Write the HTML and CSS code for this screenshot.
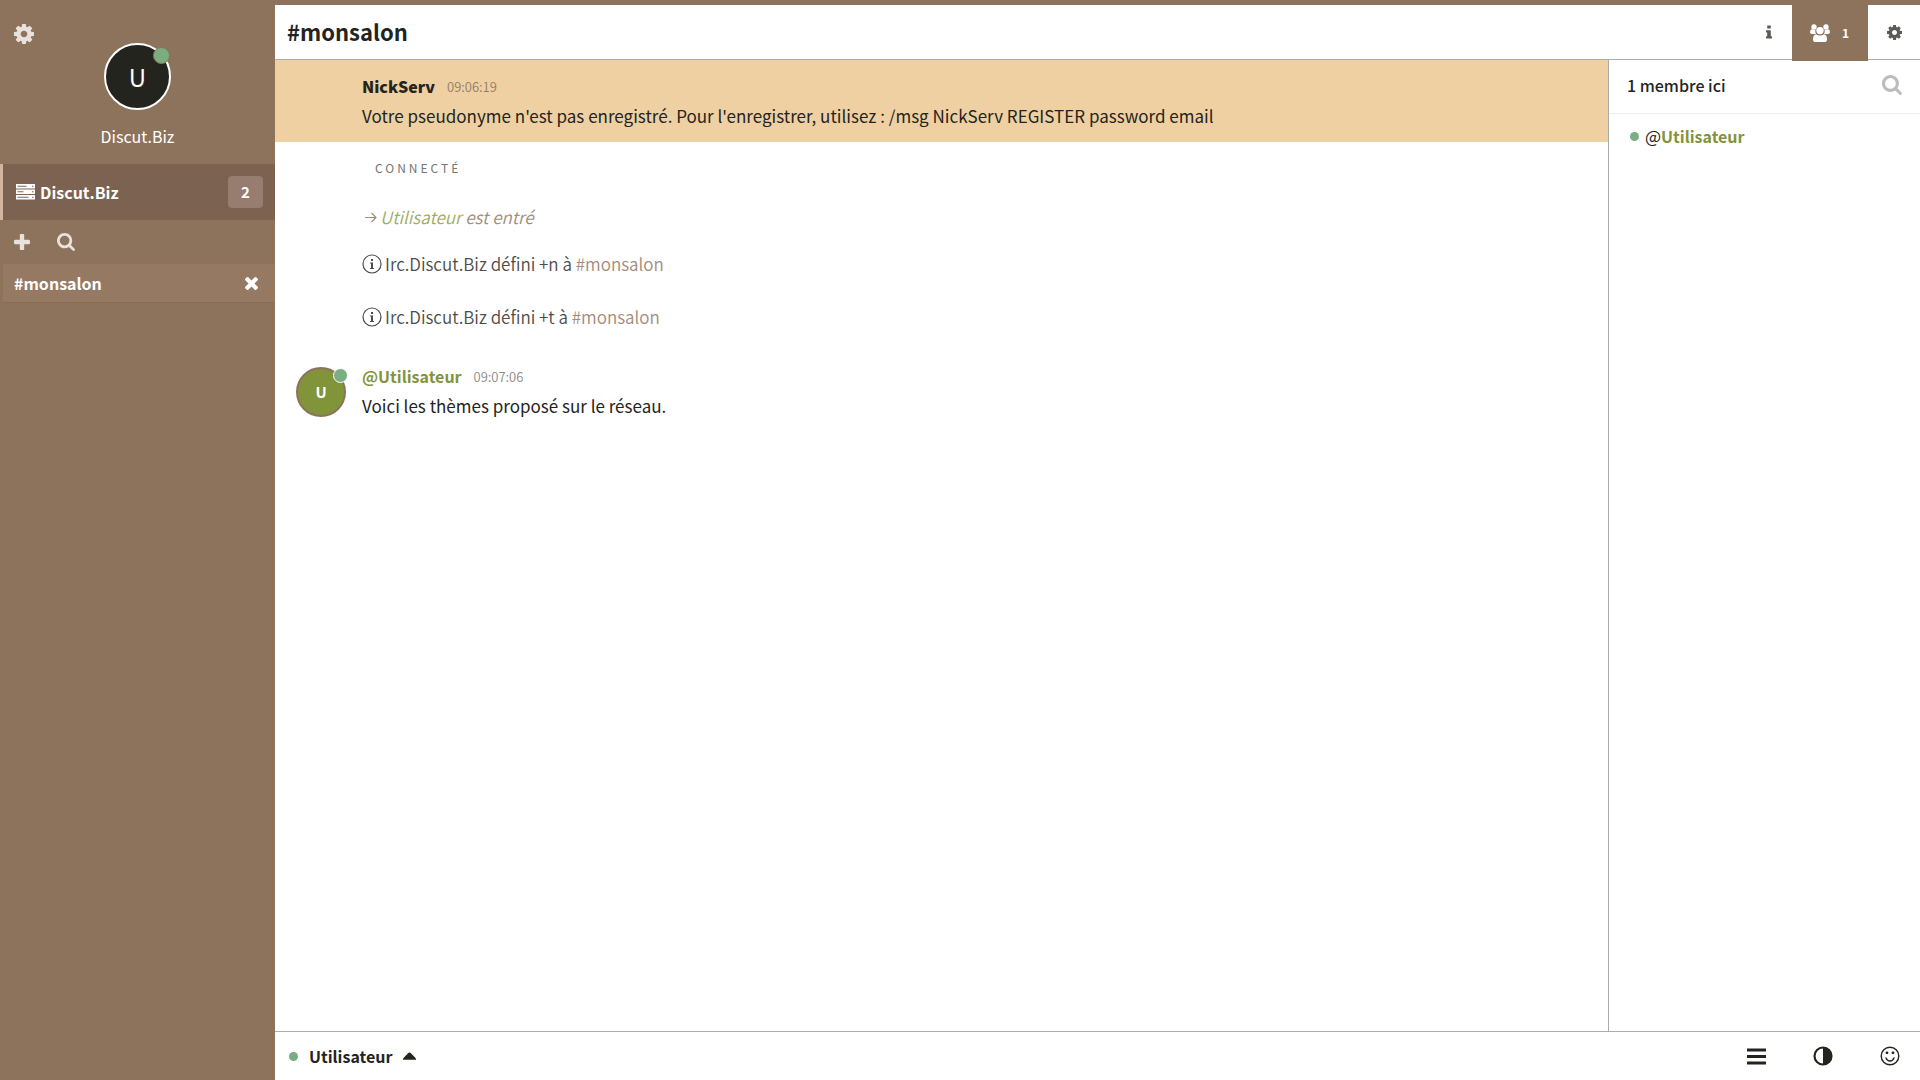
FILE: index.html
```html
<!DOCTYPE html>
<html lang="fr">
<head>
<meta charset="utf-8">
<meta name="viewport" content="width=device-width, initial-scale=1">
<title>#monsalon</title>
<link rel="stylesheet" href="styles.css">
</head>
<body>
<svg class="sprite" aria-hidden="true">
  <symbol id="cog" viewBox="128 128 1536 1536"><path d="M1152 896q0-106-75-181t-181-75-181 75-75 181 75 181 181 75 181-75 75-181zm512-109v222q0 12-8 23t-20 13l-185 28q-19 54-39 91 35 50 107 138 10 12 10 25t-9 23q-27 37-99 108t-94 71q-12 0-26-9l-138-108q-44 23-91 38-16 136-29 186-7 28-36 28h-222q-14 0-24.500-8.500t-11.500-21.500l-28-184q-49-16-90-37l-141 107q-10 9-25 9-14 0-25-11-126-114-165-168-7-10-7-23 0-12 8-23 15-21 51-66.500t54-70.500q-27-50-41-99l-183-27q-13-2-21-12.500t-8-23.500v-222q0-12 8-23t19-13l186-28q14-46 39-92-40-57-107-138-10-12-10-24 0-10 9-23 26-36 98.500-107.500t94.500-71.500q13 0 26 10l138 107q44-23 91-38 16-136 29-186 7-28 36-28h222q14 0 24.500 8.500t11.500 21.500l28 184q49 16 90 37l142-107q9-9 24-9 13 0 25 10 129 119 165 170 7 8 7 22 0 12-8 23-15 21-51 66.500t-54 70.500q26 50 41 98l183 28q13 2 21 12.500t8 23.500z"/></symbol>
  <symbol id="search" viewBox="64 128 1664 1664"><path d="M1216 832q0-185-131.500-316.500t-316.500-131.500-316.500 131.500-131.500 316.500 131.500 316.500 316.500 131.500 316.500-131.500 131.500-316.500zm512 832q0 52-38 90t-90 38q-54 0-90-38l-343-342q-179 124-399 124-143 0-273.500-55.500t-225-150-150-225-55.500-273.500 55.500-273.500 150-225 225-150 273.500-55.500 273.500 55.500 225 150 150 225 55.500 273.500q0 220-124 399l343 343q37 37 37 90z"/></symbol>
  <symbol id="plus" viewBox="192 128 1408 1408"><path d="M1600 736v192q0 40-28 68t-68 28h-416v416q0 40-28 68t-68 28h-192q-40 0-68-28t-28-68v-416h-416q-40 0-68-28t-28-68v-192q0-40 28-68t68-28h416v-416q0-40 28-68t68-28h192q40 0 68 28t28 68v416h416q40 0 68 28t28 68z"/></symbol>
  <symbol id="times" viewBox="302 366 1188 1188"><path d="M1490 1322q0 40-28 68l-136 136q-28 28-68 28t-68-28l-294-294-294 294q-28 28-68 28t-68-28l-136-136q-28-28-28-68t28-68l294-294-294-294q-28-28-28-68t28-68l136-136q28-28 68-28t68 28l294 294 294-294q28-28 68-28t68 28l136 136q28 28 28 68t-28 68l-294 294 294 294q28 28 28 68z"/></symbol>
  <symbol id="info" viewBox="576 128 640 1408"><path d="M1216 1344v128q0 26-19 45t-45 19h-512q-26 0-45-19t-19-45v-128q0-26 19-45t45-19h64v-384h-64q-26 0-45-19t-19-45v-128q0-26 19-45t45-19h384q26 0 45 19t19 45v576h64q26 0 45 19t19 45zm-128-1152v192q0 26-19 45t-45 19h-256q-26 0-45-19t-19-45v-192q0-26 19-45t45-19h256q26 0 45 19t19 45z"/></symbol>
  <symbol id="server" viewBox="0 0 19 16"><path fill-rule="evenodd" d="M0 0h19v4.500H0zM1.500 1.800v.9h9v-.9zM16 1.800v.9h1.500v-.9zM0 5.500h19V10H0zM1.500 7.300v.9h6v-.9zM16 7.300v.9h1.500v-.9zM0 11h19v4.500H0zM1.500 12.800v.9h11v-.9zM16 12.800v.9h1.500v-.9z"/></symbol>
  <symbol id="group" viewBox="0 0 20 18"><circle cx="4" cy="3" r="2.700"/><circle cx="16" cy="3" r="2.700"/><path d="M2 5Q3 6.300 5.500 5.700 4.700 8 6 10H2Q0 10 0 8.200 0 5.500 2 5zM18 5Q17 6.300 14.500 5.700 15.300 8 14 10h4q2 0 2-1.800Q20 5.500 18 5z"/><circle cx="10" cy="6.600" r="3.700"/><path d="M6 10.200q4 2.700 8 0 3 .6 3 5.200 0 2.600-2.600 2.600H5.600Q3 18 3 15.400q0-4.600 3-5.200z"/></symbol>
  <symbol id="note" viewBox="0 0 20 20"><circle cx="10" cy="10" r="9" fill="none" stroke="currentColor" stroke-width="1.200"/><path d="M9 5h2v2H9zM8 8.500h3V14h1v1H8v-1h1V9.500H8z"/></symbol>
  <symbol id="bars" viewBox="0 0 19 17"><path d="M0 .5h19v3H0zM0 7h19v3H0zM0 13.500h19v3H0z"/></symbol>
  <symbol id="contrast" viewBox="0 0 20 20"><circle cx="10" cy="10" r="8.500" fill="none" stroke="currentColor" stroke-width="2.200"/><path d="M10 1a9 9 0 0 1 0 18z"/></symbol>
  <symbol id="smile" viewBox="0 0 20 20"><g fill="none" stroke="currentColor" stroke-width="1.400" stroke-linecap="round"><circle cx="10" cy="10" r="8.800"/><path d="M6 12q1.200 3 4 3t4-3"/></g><circle cx="7" cy="6.800" r="1.400"/><circle cx="13" cy="6.800" r="1.400"/></symbol>
  <symbol id="caret" viewBox="0 0 14 8"><path d="M0 8q-.5-.6 0-1.200L6 .6q1-1 2 0l6 6.200q.5.600 0 1.200z"/></symbol>
  <symbol id="arrow" viewBox="0 0 12 12"><path d="M0 6.500h11M6.500 2 11 6.500 6.500 11" fill="none" stroke="currentColor" stroke-width="1.200"/></symbol>
</svg>
<div class="app">
  <aside class="sidebar">
    <header class="profile">
      <button class="profile-settings" aria-label="Paramètres"><svg class="icon-20"><use href="#cog"/></svg></button>
      <div class="avatar avatar-large">U<span class="presence presence-large"></span></div>
      <div class="profile-name">Discut.Biz</div>
    </header>
    <nav>
      <a class="network" href="#network"><svg class="icon-server"><use href="#server"/></svg><span class="grow">Discut.Biz</span><span class="badge">2</span></a>
      <div class="tools">
        <button aria-label="Ajouter"><svg class="icon-16"><use href="#plus"/></svg></button>
        <button aria-label="Rechercher"><svg class="icon-18"><use href="#search"/></svg></button>
      </div>
      <div class="channel">
        <a class="grow" href="#monsalon">#monsalon</a>
        <button aria-label="Fermer"><svg class="icon-13"><use href="#times"/></svg></button>
      </div>
    </nav>
  </aside>
  <div class="main">
    <header class="topbar">
      <h1>#monsalon</h1>
      <button class="tab" aria-label="Informations"><svg class="icon-info"><use href="#info"/></svg></button>
      <button class="tab tab-active" aria-label="Membres"><svg class="icon-group"><use href="#group"/></svg><span>1</span></button>
      <button class="tab tab-last" aria-label="Configuration"><svg class="icon-15"><use href="#cog"/></svg></button>
    </header>
    <div class="content">
      <main class="messages">
        <article class="message notice">
          <div class="body">
            <div class="meta"><b>NickServ</b><time>09:06:19</time></div>
            <p>Votre pseudonyme n'est pas enregistré. Pour l'enregistrer, utilisez : /msg NickServ REGISTER password email</p>
          </div>
        </article>
        <p class="connected">Connecté</p>
        <p class="event joined"><svg class="icon-arrow"><use href="#arrow"/></svg><span><a href="#utilisateur">Utilisateur</a> est entré</span></p>
        <p class="event mode"><svg class="icon-20"><use href="#note"/></svg><span>Irc.Discut.Biz défini +n à <a href="#monsalon">#monsalon</a></span></p>
        <p class="event mode"><svg class="icon-20"><use href="#note"/></svg><span>Irc.Discut.Biz défini +t à <a href="#monsalon">#monsalon</a></span></p>
        <article class="message">
          <div class="avatar avatar-small">U<span class="presence presence-small"></span></div>
          <div class="body">
            <div class="meta"><a class="nick" href="#utilisateur">@Utilisateur</a><time>09:07:06</time></div>
            <p>Voici les thèmes proposé sur le réseau.</p>
          </div>
        </article>
      </main>
      <aside class="members">
        <header><h2>1 membre ici</h2><button aria-label="Rechercher un membre"><svg class="icon-20"><use href="#search"/></svg></button></header>
        <ul><li><span class="dot"></span><span>@<a class="nick" href="#utilisateur">Utilisateur</a></span></li></ul>
      </aside>
    </div>
    <footer class="composer">
      <button class="self"><span class="dot"></span>Utilisateur<svg class="icon-caret"><use href="#caret"/></svg></button>
      <input class="grow" type="text" aria-label="Message">
      <div class="actions">
        <button aria-label="Outils"><svg class="icon-bars"><use href="#bars"/></svg></button>
        <button aria-label="Thème"><svg class="icon-20"><use href="#contrast"/></svg></button>
        <button aria-label="Émoticônes"><svg class="icon-20"><use href="#smile"/></svg></button>
      </div>
    </footer>
  </div>
</div>
</body>
</html>
```
FILE: styles.css
```css
:root {
  --brown: #8d725c;
  --ink: #24241f;
  --olive: #82943a;
  --green: #7aae80;
  --line: #acacac;
}
* { box-sizing: border-box; }
body {
  margin: 0;
  color: var(--ink);
  font: 400 17px/30px "Noto Sans CJK SC", sans-serif;
}
h1, h2, p, ul { margin: 0; padding: 0; }
ul { list-style: none; }
a { color: inherit; text-decoration: none; }
button {
  display: flex;
  align-items: center;
  padding: 0;
  border: 0;
  background: none;
  color: inherit;
  font: inherit;
  cursor: pointer;
}
svg { display: block; flex: none; fill: currentColor; }
.sprite { position: absolute; width: 0; height: 0; }
.grow { flex: 1; min-width: 0; }
.icon-13 { width: 13px; height: 13px; }
.icon-15 { width: 15px; height: 15px; }
.icon-16 { width: 16px; height: 16px; }
.icon-18 { width: 18px; height: 18px; }
.icon-20 { width: 20px; height: 20px; }
.icon-server { width: 19px; height: 16px; }
.icon-info { width: 6px; height: 14px; }
.icon-group { width: 20px; height: 18px; }
.icon-arrow { width: 12px; height: 12px; }
.icon-caret { width: 13px; height: 8px; }
.icon-bars { width: 19px; height: 17px; }

.app { display: flex; min-height: 100vh; border-top: 5px solid var(--brown); }

.sidebar { flex: none; width: 275px; background: var(--brown); color: #fff; }
.profile {
  position: relative;
  display: flex;
  flex-direction: column;
  align-items: center;
  gap: 11px;
  height: 159px;
  padding-top: 38px;
}
.profile-settings { position: absolute; top: 19px; left: 14px; color: #e8e1dc; }
.profile-name { font-size: 16px; }
.avatar {
  position: relative;
  flex: none;
  display: flex;
  align-items: center;
  justify-content: center;
  border-radius: 50%;
  color: #fff;
}
.avatar-large { width: 67px; height: 67px; border: 2px solid #fff; background: var(--ink); font-size: 24px; }
.avatar-small { width: 50px; height: 50px; margin-top: 5px; border: 2px solid var(--brown); background: var(--olive); font-size: 15px; font-weight: 700; }
.presence { position: absolute; border-radius: 50%; background: var(--green); }
.presence-large { top: 2px; right: -1px; width: 17px; height: 17px; border: 1px solid var(--brown); }
.presence-small { top: -1px; right: -4px; width: 15px; height: 15px; border: 1px solid #fff; }
.network {
  display: flex;
  align-items: center;
  gap: 5px;
  height: 56px;
  padding: 0 12px 0 13px;
  border-left: 3px solid #d4b49c;
  background: #7c6250;
  font-size: 16px;
  font-weight: 700;
}
.badge { width: 35px; height: 32px; border-radius: 4px; background: #977d70; font-size: 15px; line-height: 32px; text-align: center; }
.tools { display: flex; align-items: center; gap: 27px; height: 44px; padding-left: 14px; color: #e8e1dc; }
.channel {
  display: flex;
  align-items: center;
  height: 39px;
  margin-left: 3px;
  padding: 0 17px 0 11px;
  border-bottom: 1px solid #876c57;
  background: #957963;
  font-size: 16px;
  font-weight: 700;
}

.main { flex: 1; min-width: 0; display: flex; flex-direction: column; }
.topbar { display: flex; height: 55px; border-bottom: 1px solid var(--line); }
.topbar h1 { flex: 1; padding-left: 12px; font-size: 22px; line-height: 52px; }
.tab { padding: 0 20px; color: #5a5a56; }
.tab-active { gap: 12px; height: 56px; padding: 0 19px 0 18px; background: var(--brown); color: #fff; font-size: 12px; font-weight: 700; }
.tab-last { padding: 0 18px 0 19px; }

.content { flex: 1; display: flex; }
.messages { flex: 1; min-width: 0; }
.message { display: flex; gap: 16px; padding: 12px 20px 11px 21px; }
.notice { padding-left: 87px; background: #efd0a2; }
.meta { display: flex; align-items: center; gap: 12px; font-size: 16px; font-weight: 700; line-height: 29px; }
time { color: #8a8a88; font-size: 13px; font-weight: 350; }
.notice time { color: #8e7e68; }
.nick { color: var(--olive); font-size: 16px; font-weight: 700; }
.connected { margin: 13px 0 21px 100px; color: #757572; font-size: 12px; line-height: 26px; letter-spacing: 3px; text-transform: uppercase; }
.event { display: flex; align-items: center; gap: 3px; padding-left: 87px; font-weight: 350; }
.joined { margin-bottom: 17px; padding-left: 90px; color: #a28b7a; font-style: italic; }
.joined a { color: #9dac60; }
.mode { margin-bottom: 23px; color: #4d4d4a; }
.mode + .message { margin-top: -5px; }
.mode a { color: #a28b7a; }

.members { flex: none; width: 312px; border-left: 1px solid var(--line); }
.members header { display: flex; align-items: center; justify-content: space-between; height: 54px; padding: 0 18px 3px 18px; border-bottom: 1px solid #eee; }
.members h2 { font-size: 16px; font-weight: 500; }
.members header button { color: #bcbcbc; }
.members li { display: flex; align-items: center; gap: 6px; padding: 7px 21px; }
.dot { flex: none; width: 9px; height: 9px; border-radius: 50%; background: var(--green); }

.composer { display: flex; align-items: center; height: 49px; padding: 0 20px 0 14px; border-top: 1px solid var(--line); }
.self { gap: 11px; font-size: 16px; font-weight: 700; }
.composer input { height: 30px; border: 0; outline: 0; background: none; color: inherit; font: inherit; }
.actions { display: flex; align-items: center; gap: 47px; }
```
